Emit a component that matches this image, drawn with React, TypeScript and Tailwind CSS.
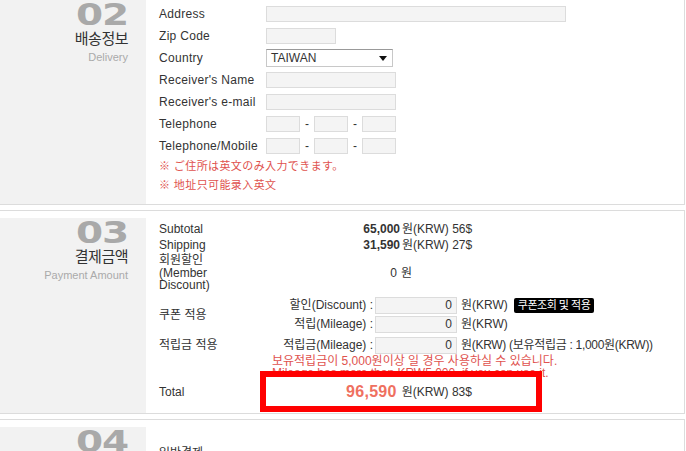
import type { ReactNode } from "react";

const sans = "font-['Liberation_Sans','Noto_Sans_CJK_KR',sans-serif]";

const Field = ({ w }: { w: string }) => <div className={`${w} h-[16px] bg-[#f4f4f4] border border-[#dcdcdc]`}></div>;

const Section = ({
  num,
  ko,
  en,
  className,
  children
}: {
  num: string;
  ko: string;
  en: string;
  className: string;
  children: ReactNode;
}) => <div className={`flex w-[685px] border-r border-[#dcdcdc] ${className}`}>
    <div className="w-[146px] shrink-0 bg-[#f2f2f2] flex flex-col items-end pr-[18px]">
      <div className="font-['DejaVu_Sans',sans-serif] font-bold text-[30px] leading-[30px] text-[#a9a9a9] scale-x-[1.3] origin-right tracking-[-1px]">
        {num}
      </div>
      <div className="text-[15px] leading-[18px] text-[#333] tracking-[-0.5px]">{ko}</div>
      <div className="text-[11px] leading-[13px] text-[#aaa] mt-[3px]">{en}</div>
    </div>
    <div className="flex-1 pl-[13px]">{children}</div>
  </div>;

const Row = ({ label, children }: { label: string; children: ReactNode }) => <div className="flex items-center h-[22px]">
    <div className="w-[107px] shrink-0 tracking-[0.3px]">{label}</div>
    {children}
  </div>;

const Tel = () => <div className="flex items-center">
    <Field w="w-[34px]" />
    <span className="w-[14px] text-center">-</span>
    <Field w="w-[34px]" />
    <span className="w-[14px] text-center">-</span>
    <Field w="w-[34px]" />
  </div>;

const Amount = ({ value, usd }: { value: string; usd: string }) => <div className="flex">
    <span className="w-[128px] text-right font-bold">{value}</span>
    <span className="ml-[2px]">원(KRW) {usd}</span>
  </div>;

const App = () => {
  return <div className={`relative w-[686px] h-[451px] overflow-hidden bg-white text-[12px] text-[#333] ${sans}`}>
      {/* 02 배송정보 */}
      <Section num="02" ko="배송정보" en="Delivery" className="h-[205px] border-b">
        <div className="pt-[3px]">
          <Row label="Address">
            <Field w="w-[300px]" />
          </Row>
          <Row label="Zip Code">
            <Field w="w-[70px]" />
          </Row>
          <Row label="Country">
            <div className="relative w-[127px] h-[18px] bg-white border border-[#c8c8c8] border-t-[#999] flex items-center pl-[4px]">
              TAIWAN
              <svg className="absolute right-[5px] top-[6px]" width="8" height="5" viewBox="0 0 8 5">
                <path d="M0 0h8L4 5z" fill="#111" />
              </svg>
            </div>
          </Row>
          <Row label="Receiver's Name">
            <Field w="w-[130px]" />
          </Row>
          <Row label="Receiver's e-mail">
            <Field w="w-[130px]" />
          </Row>
          <Row label="Telephone">
            <Tel />
          </Row>
          <Row label="Telephone/Mobile">
            <Tel />
          </Row>
          <div className="text-[11px] leading-[19px] text-[#e0524e] tracking-[0.4px] font-['Liberation_Sans','Noto_Sans_CJK_JP',sans-serif]">
            ※ ご住所は英文のみ入力できます。
          </div>
          <div className="text-[11px] leading-[19px] text-[#e0524e] tracking-[0.4px] font-['Liberation_Sans','Noto_Sans_CJK_SC',sans-serif]">
            ※ 地址只可能录入英文
          </div>
        </div>
      </Section>

      {/* 03 결제금액 */}
      <Section num="03" ko="결제금액" en="Payment Amount" className="h-[204px] mt-[5px] border-y pt-[7px]">
        <div className="pt-[3px] grid grid-cols-[113px_1fr]">
          <div className="leading-[16px]">Subtotal</div>
          <div className="leading-[16px]">
            <Amount value="65,000" usd="56$" />
          </div>
          <div className="leading-[16px]">Shipping</div>
          <div className="leading-[16px]">
            <Amount value="31,590" usd="27$" />
          </div>

          <div className="leading-[12.5px] mt-[1px]">
            회원할인
            <br />
            (Member
            <br />
            Discount)
          </div>
          <div className="mt-[1px] flex items-center">
            <span className="w-[125px] text-right">0</span>
            <span className="ml-[4px]">원</span>
          </div>

          <div className="mt-[4px] flex items-center">쿠폰 적용</div>
          <div className="mt-[4px]">
            <div className="flex items-center h-[19px]">
              <span className="w-[101px] text-right">할인(Discount) :</span>
              <div className="ml-[2px] w-[82px] h-[17px] bg-[#f4f4f4] border border-[#dcdcdc] text-right pr-[4px] leading-[15px]">0</div>
              <span className="ml-[4px]">원(KRW)</span>
              <span className="ml-[6px] bg-black text-white text-[11px] leading-[15px] px-[4px] rounded-[2px] tracking-[-0.5px]">
                쿠폰조회 및 적용
              </span>
            </div>
            <div className="flex items-center h-[19px]">
              <span className="w-[101px] text-right">적립(Mileage) :</span>
              <div className="ml-[2px] w-[82px] h-[17px] bg-[#f4f4f4] border border-[#dcdcdc] text-right pr-[4px] leading-[15px]">0</div>
              <span className="ml-[4px]">원(KRW)</span>
            </div>
          </div>

          <div className="mt-[2px] h-[19px] flex items-center">적립금 적용</div>
          <div className="mt-[2px]">
            <div className="flex items-center h-[19px]">
              <span className="w-[101px] text-right">적립금(Mileage) :</span>
              <div className="ml-[2px] w-[82px] h-[17px] bg-[#f4f4f4] border border-[#dcdcdc] text-right pr-[4px] leading-[15px]">0</div>
              <span className="ml-[4px] tracking-[-0.3px]">원(KRW) (보유적립금 : 1,000원(KRW))</span>
            </div>
            <div className="text-[#e0524e] leading-[12px]">보유적립금이 5,000원이상 일 경우 사용하실 수 있습니다.</div>
            <div className="text-[#e0524e] leading-[12px]">Mileage has more than KRW5,000, if you can use it.</div>
          </div>

          <div className="mt-[5px] leading-[16px]">Total</div>
          <div className="mt-[5px] leading-[16px]"></div>
        </div>
      </Section>

      {/* 04 */}
      <Section num="04" ko="결제수단" en="Payment" className="h-[40px] mt-[5px] border-t pt-[7px]">
        <div className="pt-[17px]">일반결제</div>
      </Section>

      {/* Total highlight */}
      <div className="absolute left-[260px] top-[371px] w-[282px] h-[41px] border-[6px] border-[#ff0000] bg-white flex items-center justify-center pl-[16px]">
        <span className="font-bold text-[16px] text-[#ef7060] tracking-[0.3px]">96,590</span>
        <span className="ml-[5px]">원(KRW) 83$</span>
      </div>
    </div>;
};

export default App;
